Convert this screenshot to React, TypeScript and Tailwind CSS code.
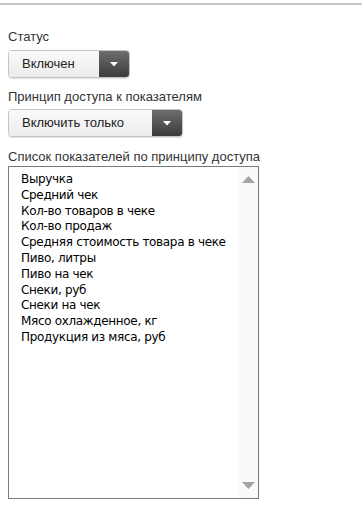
const items = [
  'Выручка',
  'Средний чек',
  'Кол-во товаров в чеке',
  'Кол-во продаж',
  'Средняя стоимость товара в чеке',
  'Пиво, литры',
  'Пиво на чек',
  'Снеки, руб',
  'Снеки на чек',
  'Мясо охлажденное, кг',
  'Продукция из мяса, руб',
];

function Dropdown({ value, width }: { value: string; width: string }) {
  return (
    <div
      className={`${width} h-[28px] flex rounded-[4px] border border-[#c4c4c4] overflow-hidden shadow-[0_1px_1px_rgba(0,0,0,0.12)]`}
    >
      <div className="flex-1 flex items-center pl-[13px] text-[13px] text-[#222] bg-gradient-to-b from-[#fafafa] to-[#ececec]">
        {value}
      </div>
      <div className="w-[30px] flex items-center justify-center bg-gradient-to-b from-[#6e6e6e] to-[#3c3c3c]">
        <svg width="8" height="5" viewBox="0 0 8 5">
          <path d="M0 0h8L4 4.5z" fill="#fff" />
        </svg>
      </div>
    </div>
  );
}

export default function App() {
  return (
    <div className="w-[363px] h-[517px] bg-white font-['Liberation_Sans',Arial,sans-serif] text-[#333]">
      <div className="h-[3px]" />
      <div className="h-[2px] bg-[#c8c8c8] w-[362px]" />

      <div className="px-[8px] pt-[24px]">
        <div className="text-[13px] leading-[16px] text-[#333]">Статус</div>
        <div className="mt-[5px]">
          <Dropdown value="Включен" width="w-[122px]" />
        </div>

        <div className="mt-[11px] text-[13px] leading-[16px]">Принцип доступа к показателям</div>
        <div className="mt-[4px]">
          <Dropdown value="Включить только" width="w-[175px]" />
        </div>

        <div className="mt-[12px] text-[13px] leading-[16px]">Список показателей по принципу доступа</div>
        <div className="mt-[1px] w-[251px] h-[333px] border border-[#7a7a7a] flex bg-white">
          <ul className="flex-1 pl-[12px] pt-[5px] font-['DejaVu_Sans',Verdana,sans-serif] text-[12px] tracking-[-0.33px] leading-[15.8px] text-black">
            {items.map((it) => (
              <li key={it}>{it}</li>
            ))}
          </ul>
          <div className="w-[19px] bg-[#fafafa] flex flex-col items-center justify-between py-[9px]">
            <svg width="13" height="7" viewBox="0 0 13 7">
              <path d="M6.5 0L13 7H0z" fill="#a3a3a3" />
            </svg>
            <svg width="13" height="7" viewBox="0 0 13 7">
              <path d="M0 0h13L6.5 7z" fill="#a3a3a3" />
            </svg>
          </div>
        </div>
      </div>
    </div>
  );
}
